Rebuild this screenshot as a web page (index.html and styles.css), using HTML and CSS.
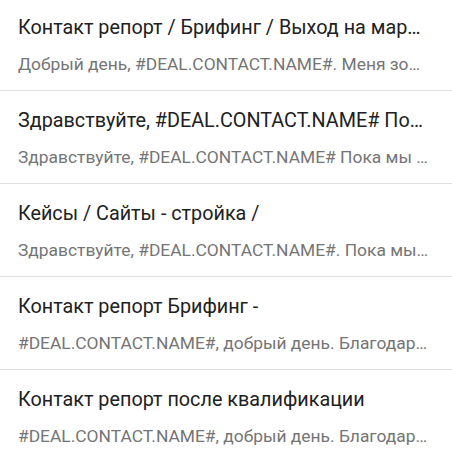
FILE: index.html
```html
<!DOCTYPE html>
<html lang="ru">
<head>
    <meta charset="UTF-8">
    <meta name="viewport" content="width=device-width, initial-scale=1.0">
    <title>Шаблоны</title>
    <link rel="stylesheet" href="styles.css">
</head>
<body>

    <ul class="template-list">
        <li class="template-item">
            <div class="template-title">Контакт репорт / Брифинг / Выход на маркетинговую встречу</div>
            <div class="template-text">Добрый день, #DEAL.CONTACT.NAME#. Меня зовут</div>
        </li>
        <li class="template-item">
            <div class="template-title">Здравствуйте, #DEAL.CONTACT.NAME# Пока мы готовим</div>
            <div class="template-text">Здравствуйте, #DEAL.CONTACT.NAME# Пока мы готовим</div>
        </li>
        <li class="template-item">
            <div class="template-title">Кейсы / Сайты - стройка /</div>
            <div class="template-text">Здравствуйте, #DEAL.CONTACT.NAME#. Пока мы готовим</div>
        </li>
        <li class="template-item">
            <div class="template-title">Контакт репорт Брифинг -</div>
            <div class="template-text">#DEAL.CONTACT.NAME#, добрый день. Благодарим за встречу</div>
        </li>
        <li class="template-item">
            <div class="template-title">Контакт репорт после квалификации</div>
            <div class="template-text">#DEAL.CONTACT.NAME#, добрый день. Благодарим за встречу</div>
        </li>
    </ul>

</body>
</html>
```

FILE: styles.css
```css
body {
    font-family: 'Roboto', 'Noto Sans', sans-serif;
    background-color: #fff;
    color: #212121;
    margin: 0;
    padding: 0;
}
.template-list {
    list-style-type: none;
    padding: 0;
    margin: -2px 0 0 0;
}
.template-item {
    display: flex;
    flex-direction: column;
    gap: 13px;
    box-sizing: border-box;
    height: 93px;
    padding: 18px 22px 0 18px;
    border-bottom: 1px solid #e0e0e0;
}
.template-title,
.template-text {
    white-space: nowrap;
    overflow: hidden;
    text-overflow: ellipsis;
}
.template-title {
    font-size: 19.8px;
    line-height: 24px;
    color: #212121;
}
.template-text {
    font-size: 17.4px;
    line-height: 22px;
    color: #757575;
}
```
